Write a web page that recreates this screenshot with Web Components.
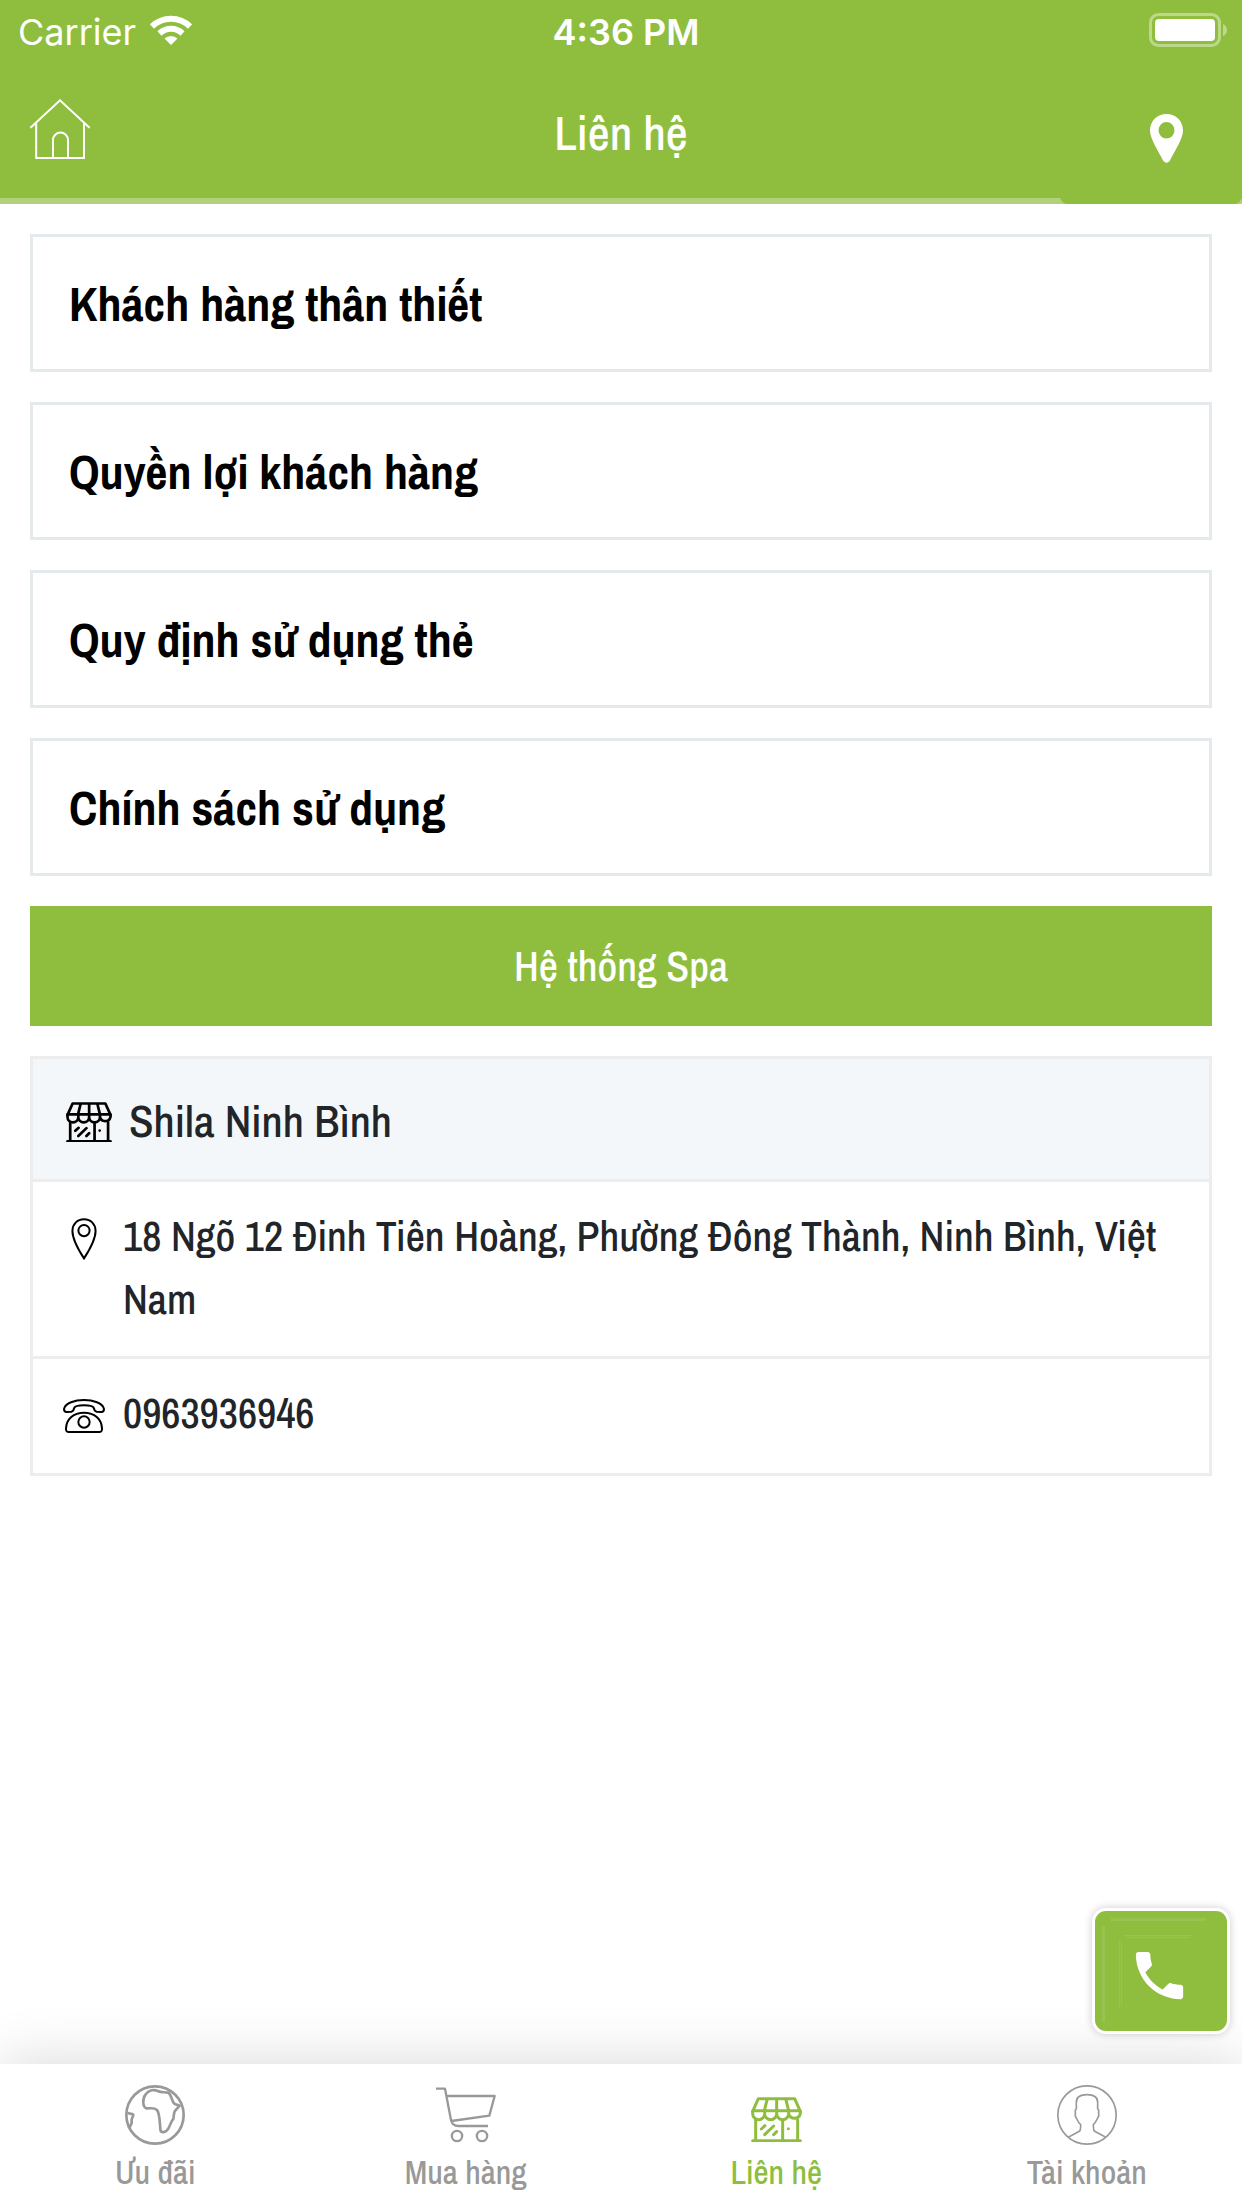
<!DOCTYPE html>
<html lang="vi">
<head>
<meta charset="utf-8">
<meta name="viewport" content="width=device-width, initial-scale=1">
<title>Liên hệ</title>
<style>
  html { --green: #8fbe3f; --line: #e4e9eb; --row-line: #ededed; --muted: #999; --ink: #212529; }
  body { margin: 0; background: #fff; color: var(--ink); font-weight: 500;
    font-family: "Archivo Narrow", "Liberation Sans Narrow", "Roboto Condensed", "Liberation Sans", sans-serif; }
</style>
</head>
<body>
<contact-app></contact-app>
<script>
const define = (name, html) => {
  const template = document.createElement('template');
  template.innerHTML = '<style>*{box-sizing:border-box}svg{display:block;flex:none}</style>' + html;
  customElements.define(name, class extends HTMLElement {
    constructor() {
      super();
      this.attachShadow({ mode: 'open' }).append(template.content.cloneNode(true));
    }
  });
};

/* Shop front, used by the branch card and by the tab bar */
define('shop-icon', `
<style>:host{display:block;flex:none;width:46px}svg{width:100%;height:auto}</style>
<svg viewBox="0 0 153 136" fill="none" stroke="currentColor" stroke-width="9" stroke-linecap="round" stroke-linejoin="round" aria-hidden="true">
  <path d="M5 43 22 5H131L148 43M5 41H148M49 5 40 41M77 5V41M104 5 113 41"/>
  <path d="M5 43v7a18 18 0 0 0 36 0a18 18 0 0 0 36 0a18 18 0 0 0 36 0a18 18 0 0 0 35 0v-7M41 41v9M77 41v9M113 41v9"/>
  <path d="M14 68V131M140 68V131M95 70V131M5 131H148M31 96 42 86M41 113 68 87M68 113 77 104M112 95v0"/>
</svg>`);

define('status-bar', `
<style>
  :host{display:grid;grid-template:60px / 1fr auto 1fr;align-items:center;padding:0 8px 0 18px;color:#fff;font:400 36px/60px Inter,"Liberation Sans",sans-serif}
  .net{display:flex;align-items:center;gap:14px}
  .text{padding-top:3px}
  .time{font-weight:600}
  .bat{justify-self:end;margin-right:6px}
</style>
<span class="net"><span class="text">Carrier</span>
<svg width="42" height="30" viewBox="0 0 42 30" fill="none" stroke="#fff" stroke-width="6" aria-label="Wi-Fi"><path d="M2 11.500a27 27 0 0 1 38 0M9.500 18.500a16.500 16.500 0 0 1 23 0"/><path d="M21 30 14.500 23.500a9.500 9.500 0 0 1 13 0Z" fill="#fff" stroke="none"/></svg></span>
<span class="text time">4:36 PM</span>
<svg class="bat" width="79" height="34" viewBox="0 0 79 34" aria-label="Battery"><rect x="1.500" y="1.500" width="69" height="31" rx="8" fill="none" stroke="#fff" stroke-opacity=".4" stroke-width="3"/><rect x="6" y="6" width="60" height="22" rx="4" fill="#fff"/><path d="M74 11q4 2 4 6t-4 6Z" fill="#fff" fill-opacity=".4"/></svg>`);

define('page-header', `
<style>
  :host{display:block;background:var(--green);color:#fff}
  nav{display:grid;grid-template-columns:182px 1fr 182px;height:144px;background:linear-gradient(#b1d27a,#b1d27a) bottom/100% 6px no-repeat}
  a{display:flex;color:inherit}
  .home{padding:39px 0 0 30px}
  .place{padding:54px 0 0 90px;background:var(--green);border-radius:0 0 8px 8px}
  h1{margin:0;padding-top:37px;text-align:center;font-size:48px;line-height:72px;font-weight:inherit}
</style>
<status-bar></status-bar>
<nav>
  <a class="home" href="#home" aria-label="Trang chủ"><svg width="60" height="60" viewBox="0 0 180 180" fill="none" stroke="#fff" stroke-width="6" stroke-linecap="round"><path d="M3 85 90 4 177 85"/><path d="M18.500 73V177H162V73M69 177V123a21 21 0 0 1 45 0V177" stroke-linecap="butt"/></svg></a>
  <h1>Liên hệ</h1>
  <a class="place" href="#map" aria-label="Bản đồ"><svg width="33" height="49" viewBox="0 0 33 49" fill="#fff"><path fill-rule="evenodd" d="M16.500 0C26 0 33 7 33 16.500C33 25 24 38 20 46.500Q16.500 51 13 46.500C9 38 0 25 0 16.500C0 7 7 0 16.500 0ZM16.500 8a8 8.300 0 1 0 0 16.600a8 8.300 0 1 0 0-16.600Z"/></svg></a>
</nav>`);

define('menu-card', `
<style>
  :host{display:block}
  a{display:block;border:3px solid var(--line);padding:31px 36px 29px;color:#000;text-decoration:none;font-size:48px;line-height:72px;font-weight:700}
</style>
<a href="#info"><slot></slot></a>`);

define('wide-button', `
<style>
  :host{display:block}
  button{display:block;width:100%;border:0;background:var(--green);color:#fff;padding:28px 24px;font-family:inherit;font-weight:inherit;font-size:42px;line-height:64px}
</style>
<button type="button"><slot></slot></button>`);

define('branch-row', `
<style>
  :host{display:flex;gap:18px;padding:23px 36px 25px 30px;font-size:42px;line-height:63px;border-top:3px solid var(--row-line)}
  :host(:last-of-type){padding-bottom:28px}
  .icon{display:flex;justify-content:center;align-items:center;flex:none;width:42px;height:63px;padding-top:4px}
</style>
<span class="icon"><slot name="icon"></slot></span><slot></slot>`);

define('branch-card', `
<style>
  :host{display:block;border:3px solid var(--row-line)}
  header{display:flex;align-items:center;gap:17px;padding:26px 33px 22px;background:#f3f7fa;color:#000}
  shop-icon{padding-top:2px}
  h2{margin:0;color:var(--ink);font-size:45px;line-height:72px;font-weight:inherit}
  a{color:inherit;text-decoration:none}
</style>
<header><shop-icon></shop-icon><h2>Shila Ninh Bình</h2></header>
<branch-row>
  <svg slot="icon" width="26" height="42" viewBox="0 0 78 127" fill="none" stroke="#000" stroke-width="6"><path d="M39 4C60 4 74 19 74 39C74 65 50 105 39 122C28 105 4 65 4 39C4 19 18 4 39 4Z"/><circle cx="39" cy="38" r="17"/></svg>
  <span>18 Ngõ 12 Đinh Tiên Hoàng, Phường Đông Thành, Ninh Bình, Việt Nam</span>
</branch-row>
<branch-row>
  <svg slot="icon" width="42" height="34" viewBox="0 0 126 102" fill="none" stroke="#000" stroke-width="6" stroke-linejoin="round"><path d="M3 30C6 12 36 3 63 3S120 12 123 30Q123 39 115 39L101 38Q94 36 93 28Q90 19 63 19T33 28Q32 36 25 38L11 39Q3 39 3 30Z"/><path d="M18 99Q8 99 9 89C10 60 32 41 63 41S116 60 117 89Q118 99 108 99Z"/><circle cx="63" cy="69" r="17"/></svg>
  <a href="tel:0963936946">0963936946</a>
</branch-row>`);

define('call-button', `
<style>
  :host{position:fixed;right:12px;bottom:174px;z-index:2}
  a{display:grid;place-items:center;width:138px;height:126px;border:3px solid #fff;border-radius:14px;background:var(--green);box-shadow:0 0 9px rgba(0,0,0,.2)}
</style>
<a href="tel:0963936946" aria-label="Gọi điện">
  <svg width="132" height="120" viewBox="0 0 132 120" fill="none" stroke="#fff" stroke-opacity=".09"><path stroke-width="3" d="M16 8.500H111M8.500 15V111"/><path d="M29 24.500H97M31 26.500H95M24.500 29V97M26.500 31V95"/><path fill="#fff" stroke="none" transform="translate(33 33) scale(2.625)" d="M6.620 10.790c1.440 2.830 3.760 5.140 6.590 6.590l2.200-2.200c.27-.27.67-.36 1.020-.24 1.120.37 2.330.57 3.570.57.55 0 1 .45 1 1V20c0 .55-.45 1-1 1-9.390 0-17-7.610-17-17 0-.55.45-1 1-1h3.500c.55 0 1 .45 1 1 0 1.250.2 2.450.57 3.570.11.35.03.74-.25 1.020l-2.200 2.200z"/></svg>
</a>`);

define('tab-item', `
<style>
  :host{display:block;flex:1;color:var(--muted)}
  :host([current]){color:var(--green)}
  a{display:flex;flex-direction:column;align-items:center;gap:3px;padding:21px 0 12px;color:inherit;text-decoration:none;font-size:33px;line-height:48px}
  .icon{display:flex;align-items:center;justify-content:center;height:60px}
  :host([current]) .icon{align-items:flex-end;padding-bottom:3px}
</style>
<a href="#tab"><span class="icon"><slot name="icon"></slot></span><span><slot></slot></span></a>`);

define('tab-bar', `
<style>
  :host{display:block;position:sticky;bottom:0;background:#fff;box-shadow:0 0 60px rgba(0,0,0,.16)}
  nav{display:flex}
  shop-icon{width:51px}
</style>
<nav>
  <tab-item><svg slot="icon" width="60" height="60" viewBox="0 0 180 180" fill="none" stroke="currentColor" stroke-width="8" stroke-linejoin="round"><circle cx="90" cy="90" r="86"/><path d="M64 70C52 66 52 40 62 28C72 14 88 13 98 18C110 24 118 20 130 23C140 30 140 50 148 56L164 62L154 73C144 80 148 90 145 102C136 110 136 126 126 136C118 144 106 144 106 132C104 108 104 84 96 75C86 66 76 71 64 70Z"/><path d="M8 84 24 88C28 94 20 96 20 104V114L14 127"/></svg>Ưu đãi</tab-item>
  <tab-item><svg slot="icon" width="60" height="60" viewBox="0 0 180 180" fill="none" stroke="currentColor" stroke-width="7" stroke-linejoin="round"><path d="M0 11H27L45 105Q49 123 67 123H156M31 33H176L160 92 46 108"/><circle cx="63" cy="153" r="15.500"/><circle cx="138" cy="153" r="15.500"/></svg>Mua hàng</tab-item>
  <tab-item current><shop-icon slot="icon"></shop-icon>Liên hệ</tab-item>
  <tab-item><svg slot="icon" width="60" height="60" viewBox="0 0 180 180" fill="none" stroke="currentColor" stroke-width="5" stroke-linejoin="round"><circle cx="90" cy="90" r="87.500"/><path d="M35 156 67 139Q71 136 71 119C62 112 59 98 55 94V75L58 72V52C58 36 69 29 90 29S122 36 122 52V72L125 75V94C121 98 118 112 109 119Q109 136 113 139L145 156"/></svg>Tài khoản</tab-item>
</nav>`);

define('contact-app', `
<style>
  :host{display:flex;flex-direction:column;min-height:100vh}
  main{flex:1;display:flex;flex-direction:column;gap:30px;padding:30px}
</style>
<page-header></page-header>
<main>
  <menu-card>Khách hàng thân thiết</menu-card>
  <menu-card>Quyền lợi khách hàng</menu-card>
  <menu-card>Quy định sử dụng thẻ</menu-card>
  <menu-card>Chính sách sử dụng</menu-card>
  <wide-button>Hệ thống Spa</wide-button>
  <branch-card></branch-card>
</main>
<call-button></call-button>
<tab-bar></tab-bar>`);
</script>
</body>
</html>
